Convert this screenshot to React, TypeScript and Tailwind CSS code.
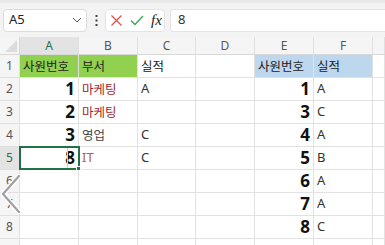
import React from "react";

const cols = ["A", "B", "C", "D", "E", "F", ""];
const widths = [59, 59, 58, 59, 59, 59, 12];

type Cell = { t?: string; cls?: string; bg?: string };

const num = "justify-end font-['Noto_Sans'] font-bold text-[17px] text-[#111] pr-[3px]";
const kr = "font-['Noto_Sans_CJK_KR'] text-[12.5px] pl-[3px]";
const let_ = "font-['Noto_Sans'] text-[13px] pl-[3px] text-[#333]";

const rows: Cell[][] = [
  [
    { t: "사원번호", cls: kr + " text-[#222]", bg: "bg-[#92d050]" },
    { t: "부서", cls: kr + " text-[#222]", bg: "bg-[#92d050]" },
    { t: "실적", cls: kr + " text-[#222]" },
    {},
    { t: "사원번호", cls: kr + " text-[#222]", bg: "bg-[#bdd7ee]" },
    { t: "실적", cls: kr + " text-[#222]", bg: "bg-[#bdd7ee]" },
    {},
  ],
  [
    { t: "1", cls: num },
    { t: "마케팅", cls: kr + " text-[#a01f2c]" },
    { t: "A", cls: let_ },
    {},
    { t: "1", cls: num },
    { t: "A", cls: let_ },
    {},
  ],
  [
    { t: "2", cls: num },
    { t: "마케팅", cls: kr + " text-[#a01f2c]" },
    {},
    {},
    { t: "3", cls: num },
    { t: "C", cls: let_ },
    {},
  ],
  [
    { t: "3", cls: num },
    { t: "영업", cls: kr + " text-[#444]" },
    { t: "C", cls: let_ },
    {},
    { t: "4", cls: num },
    { t: "A", cls: let_ },
    {},
  ],
  [
    { t: "8", cls: num },
    { t: "IT", cls: let_ + " text-[#b5651d]" },
    { t: "C", cls: let_ },
    {},
    { t: "5", cls: num },
    { t: "B", cls: let_ + " text-[#3a5a7a]" },
    {},
  ],
  [{}, {}, {}, {}, { t: "6", cls: num }, { t: "A", cls: let_ }, {}],
  [{}, {}, {}, {}, { t: "7", cls: num }, { t: "A", cls: let_ }, {}],
  [{}, {}, {}, {}, { t: "8", cls: num }, { t: "C", cls: let_ }, {}],
  [{}, {}, {}, {}, {}, {}, {}],
];

export default function App() {
  return (
    <div className="relative w-[385px] h-[245px] overflow-hidden bg-white font-['Noto_Sans']">
      {/* formula bar */}
      <div className="h-[37px] bg-[#f3f3f3] flex items-center pl-[3px] border-t-[3px] border-[#e8e8e8]">
        <div className="w-[84px] h-[23px] bg-white border border-[#dcdcdc] rounded-[4px] flex items-center justify-between pl-[5px] pr-[4px]">
          <span className="text-[13px] text-[#222] font-['Noto_Sans']">A5</span>
          <svg width="10" height="6" viewBox="0 0 10 6">
            <path d="M1 1 L5 5 L9 1" fill="none" stroke="#555" strokeWidth="1" />
          </svg>
        </div>
        <div className="w-[18px] flex justify-center">
          <svg width="3" height="11" viewBox="0 0 3 11">
            <rect x="0.5" y="0" width="2" height="2" fill="#444" />
            <rect x="0.5" y="4.5" width="2" height="2" fill="#444" />
            <rect x="0.5" y="9" width="2" height="2" fill="#444" />
          </svg>
        </div>
        <div className="w-[60px] h-[23px] bg-white rounded-[4px] border border-[#e4e4e4] flex items-center pl-[4px] gap-[7px]">
          <svg width="13" height="13" viewBox="0 0 13 13">
            <path d="M1.5 1.5 L11.5 11.5 M11.5 1.5 L1.5 11.5" stroke="#e0514b" strokeWidth="1.3" fill="none" />
          </svg>
          <svg width="14" height="11" viewBox="0 0 14 11">
            <path d="M1 5.5 L5 9.5 L13 1" stroke="#3fa05a" strokeWidth="1.3" fill="none" />
          </svg>
          <span className="font-['Liberation_Serif'] italic text-[15px] text-[#222] leading-none">fx</span>
        </div>
        <div className="ml-[5px] flex-1 h-[23px] bg-white border-y border-l border-[#e4e4e4] rounded-l-[4px] flex items-center pl-[7px]">
          <span className="text-[13px] text-[#333]">8</span>
        </div>
      </div>

      {/* column headers */}
      <div className="flex h-[18px] bg-[#f5f5f5] border-b border-[#d8d8d8]">
        <div className="w-[20px] border-r border-[#d8d8d8] relative">
          <svg className="absolute right-[2px] bottom-[2px]" width="12" height="12" viewBox="0 0 12 12">
            <path d="M12 0 L12 12 L0 12 Z" fill="#dcdcdc" />
          </svg>
        </div>
        {cols.map((c, i) => (
          <div
            key={i}
            style={{ width: widths[i] }}
            className={`shrink-0 border-r border-[#e0e0e0] flex items-center justify-center text-[12px] ${
              i === 0 ? "bg-[#e3e3e3] text-[#2c6e49]" : "text-[#555]"
            }`}
          >
            {c}
          </div>
        ))}
      </div>

      {/* rows */}
      {rows.map((r, ri) => (
        <div key={ri} className="flex h-[23px]">
          <div
            className={`w-[20px] shrink-0 border-r border-b border-[#e0e0e0] flex items-center justify-center text-[12px] ${
              ri === 4 ? "bg-[#e3e3e3] text-[#217346]" : "bg-[#f5f5f5] text-[#555]"
            }`}
          >
            {ri < 8 ? ri + 1 : ""}
          </div>
          {r.map((c, ci) => (
            <div
              key={ci}
              style={{ width: widths[ci] }}
              className={`shrink-0 border-r border-b border-[#e2e2e2] flex items-center overflow-hidden whitespace-nowrap ${c.bg ?? ""} ${c.cls ?? ""}`}
            >
              {c.t}
            </div>
          ))}
        </div>
      ))}

      {/* selection on A5 */}
      <div className="absolute left-[19px] top-[146px] w-[61px] h-[24px] border-2 border-[#217346] pointer-events-none">
        <div className="absolute left-[46px] top-0 bottom-0 w-px bg-[#cfcfcf]" />
        <div className="absolute -right-[3px] -bottom-[3px] w-[5px] h-[5px] bg-[#217346] border border-white" />
      </div>

      {/* left chevron overlay */}
      <svg className="absolute left-0 top-[174px]" width="22" height="40" viewBox="0 0 22 40">
        <path d="M19 2 L3 20 L19 38" fill="none" stroke="#ffffff" strokeWidth="5" strokeLinecap="round" strokeLinejoin="round" />
        <path d="M19 2 L3 20 L19 38" fill="none" stroke="#a0a0a0" strokeWidth="2.2" strokeLinecap="round" strokeLinejoin="round" />
      </svg>
    </div>
  );
}
